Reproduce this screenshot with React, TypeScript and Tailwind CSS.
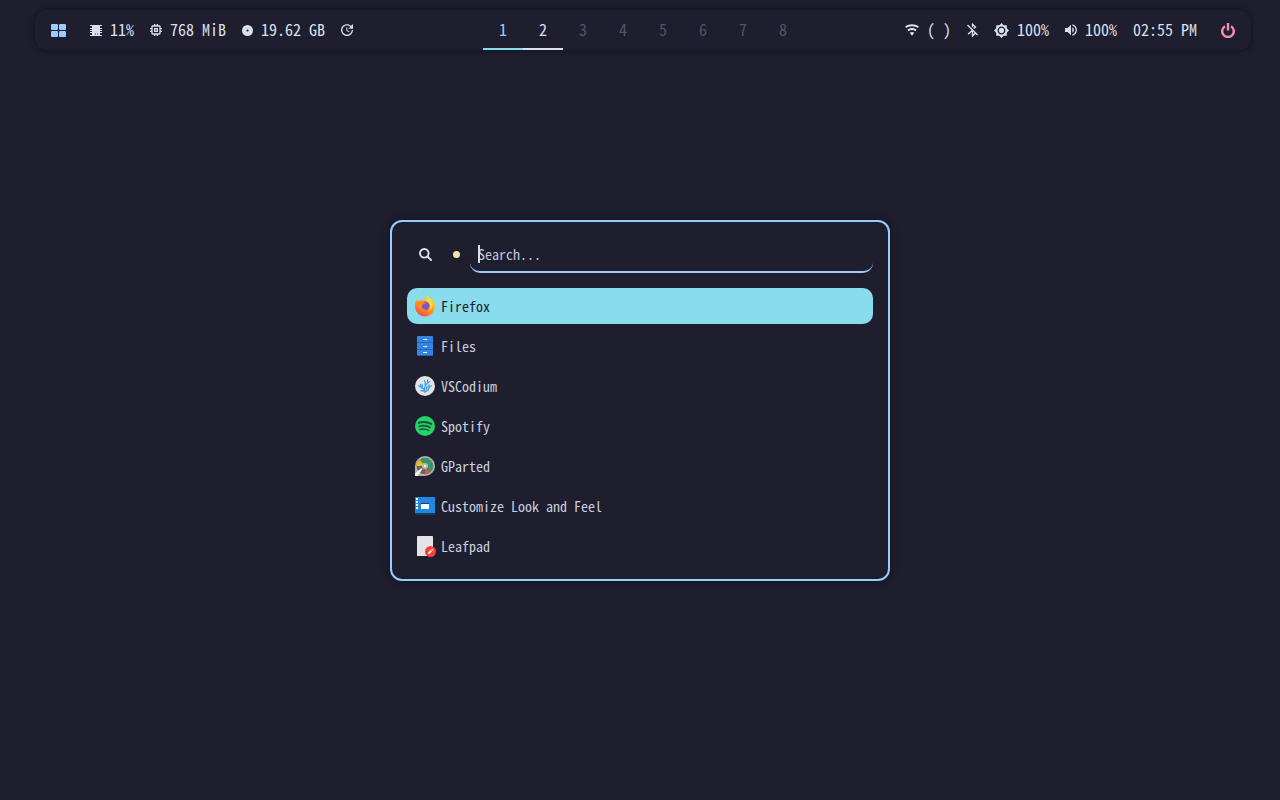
import type { ReactNode } from "react";
import { MdBluetoothDisabled, MdBrightness7, MdMemory, MdUpdate, MdVolumeUp } from "react-icons/md";

function GridIcon() {
  return (
    <svg viewBox="0 0 15 13" className="h-[13px] w-[15px] fill-[#96cdfb]">
      <rect width="7" height="6" rx="1" />
      <rect x="8" width="7" height="6" rx="1" />
      <rect y="7" width="7" height="6" rx="1" />
      <rect x="8" y="7" width="7" height="6" rx="1" />
    </svg>
  );
}

function ChipIcon() {
  return (
    <svg viewBox="0 0 12 11" className="h-[11px] w-3 fill-current">
      <path d="M2 0h8v11H2z" />
      <path d="M0 0h12v1H0zM0 3h12v1H0zM0 5h12v1H0zM0 7h12v1H0zM0 10h12v1H0z" />
      <path d="M5 8h1v2H5zM7 8h1v2H7z" fill="#7c7c8e" />
    </svg>
  );
}

function DiscIcon() {
  return (
    <svg viewBox="0 0 11 11" className="size-[11px] fill-current">
      <circle cx="5.500" cy="5.500" r="5.500" />
      <circle cx="5.500" cy="5.500" r="1.100" fill="#1e1e2e" />
    </svg>
  );
}

function WifiIcon() {
  return (
    <svg viewBox="1 3 22 18" className="h-3 w-[14px] fill-current">
      <path d="M12 21l3.6-4.8C14.6 15.45 13.35 15 12 15s-2.6.45-3.6 1.2L12 21M12 3C7.95 3 4.21 4.34 1.2 6.6L3 9c2.5-1.88 5.62-3 9-3s6.5 1.12 9 3l1.8-2.4C19.79 4.34 16.05 3 12 3m0 6c-2.7 0-5.19.89-7.2 2.4l1.8 2.4C8.1 12.67 9.97 12 12 12s3.9.67 5.4 1.8l1.8-2.4C17.19 9.89 14.7 9 12 9z" />
    </svg>
  );
}

function PowerIcon() {
  return (
    <svg viewBox="0 0 14 15" className="h-[15px] w-[14px] fill-none stroke-[#f28fad]">
      <path d="M4 3.2A5.8 5.8 0 1 0 10 3.2M7 0v7.5" strokeWidth="2.4" />
    </svg>
  );
}

function SearchIcon() {
  return (
    <svg viewBox="0 0 13 13" className="size-[13px] fill-none stroke-current">
      <circle cx="5.3" cy="5.3" r="4.3" strokeWidth="1.9" />
      <path d="M8.5 8.5l3.6 3.6" strokeWidth="2" strokeLinecap="round" />
    </svg>
  );
}

function FirefoxIcon() {
  return (
    <svg viewBox="0 0 20 22" className="h-[22px] w-5">
      <defs>
        <linearGradient id="fox" x1="0.8" y1="0.1" x2="0.25" y2="1">
          <stop offset="0" stopColor="#ffde3b" />
          <stop offset="0.4" stopColor="#ffa21f" />
          <stop offset="0.7" stopColor="#ff7a24" />
          <stop offset="1" stopColor="#f0405f" />
        </linearGradient>
      </defs>
      <path d="M1.4 4.6L3 6.2l2-.4c2 0 3.400-1.800 5.400-1.800C10.600 2.600 11.600 1.200 13 .6c.2 2 1.600 2.600 3 4.600l.6-1.600C19 6 20 8.500 20 11.500A10 10 0 0 1 0 11.500C0 9 .6 6.600 1.400 4.600z" fill="url(#fox)" />
      <path d="M13 .8c.2 3 4.600 4.400 4.600 9 0 2.800-1.200 4.800-3.600 5.800 1.800-3 1.400-5.800-.2-7.200-2.600-1.600-4.200-4.600-.8-7.600z" fill="#ffd93b" />
      <circle cx="10.200" cy="10.800" r="4.400" fill="#7d54c7" />
      <path d="M3 6.400c2-1 4.200-.6 5.400 1l2.400.4c-.4 1-1.600 1.400-3 1.800-.4.300-.8.800-1 1.400.2 2 1.600 3.400 3.800 3.600-1.600 1.400-4.400.8-5.800-1.200C2.600 11.600 2.400 8.800 3 6.400z" fill="#ff8a1c" />
    </svg>
  );
}

function FilesIcon() {
  return (
    <svg viewBox="0 0 16 20" className="h-5 w-4">
      <rect width="16" height="20" rx="0.500" fill="#3584e4" />
      <path d="M0 6h16v1H0zM0 13h16v1H0zM0 19h16v1H0z" fill="#1f66bd" />
      <path d="M6 3h4v1H6zM6 10h4v1H6zM6 16h4v1H6z" fill="#fff" />
    </svg>
  );
}

function CodiumIcon() {
  return (
    <svg viewBox="0 0 20 20" className="size-5">
      <circle cx="10" cy="10" r="10" fill="#e4e4e4" />
      <g fill="none" stroke="#3fa0e8" strokeWidth="1.300" strokeLinecap="round">
        <path d="M10 16.500c-1-2-.5-4.500.2-6.500.6-2 0-4-.7-5.500M10 13c-3 0-4.500-1.500-4.500-4.500M5.700 11L3.600 9.700M7.500 12.500L7.200 8.700M10 15.500c3.500-.5 4.500-3 4-6.500M14 11.500l2.300-1.700M10.400 9.500L12.600 7V4M12.500 7l2-1.300M6 14.500l2.500.5M11.500 13l.7-2.500" />
      </g>
    </svg>
  );
}

function SpotifyIcon() {
  return (
    <svg viewBox="0 0 20 20" className="size-5">
      <circle cx="10" cy="10" r="10" fill="#24d366" />
      <g fill="none" stroke="#1d4f39" strokeLinecap="round">
        <path d="M3.800 6.800c4.200-1.300 8.800-.9 12.400 1.100" strokeWidth="2.100" />
        <path d="M4.400 10.300c3.700-1.100 7.500-.7 10.700 1.100" strokeWidth="1.700" />
        <path d="M5 13.500c3.200-.9 6.200-.6 8.900 1" strokeWidth="1.400" />
      </g>
    </svg>
  );
}

function PartedIcon() {
  return (
    <svg viewBox="0 0 20 20" className="size-5">
      <path d="M0 20V10A10 10 0 1 1 10 20z" fill="#b1b1ae" />
      <circle cx="10" cy="10" r="8.300" fill="#3d9462" />
      <path d="M10 10L4.500 3.800A8.300 8.300 0 0 0 1.700 10z" fill="#fbb90c" />
      <path d="M10 10H1.700A8.300 8.300 0 0 0 10 18.300z" fill="#62625f" />
      <path d="M10 10v8.300a8.300 8.300 0 0 0 4.600-1.500z" fill="#f4484d" />
      <circle cx="10" cy="10" r="3" fill="#b8b8b5" />
      <circle cx="10" cy="10" r="1.200" fill="#eee" />
      <path d="M0 20v-2.500l6.500-5.500 1 1L2.500 20z" fill="#f4f4f4" />
    </svg>
  );
}

function AppearanceIcon() {
  return (
    <svg viewBox="0 0 20 18" className="h-[18px] w-5">
      <rect width="20" height="18" rx="0.500" fill="#1b3a57" />
      <rect width="20" height="16" rx="0.500" fill="#1e88e5" />
      <path d="M1 1h2v2H1zM1 4h2v2H1zM1 7h2v2H1zM1 10h2v2H1z" fill="#fff" />
      <path d="M6 6h8v1H6z" fill="#17426a" />
      <path d="M6 7h8v5H6z" fill="#fff" />
    </svg>
  );
}

function LeafpadIcon() {
  return (
    <svg viewBox="0 0 20 21" className="h-[21px] w-5 overflow-visible">
      <rect x="2" width="16" height="20" rx="0.500" fill="#e4e4e4" />
      <circle cx="15.500" cy="15.500" r="5.500" fill="#f44336" />
      <path d="M13 18l.4-1.700 2.300-2.300 1.300 1.300-2.300 2.300zM16.200 13.500l.8-.8 1.300 1.300-.8.8z" fill="#fff" />
    </svg>
  );
}

function Stat({ icon, children }: { icon: ReactNode; children?: ReactNode }) {
  return (
    <div className="flex items-center gap-2 whitespace-pre">
      {icon}
      {children && <span className="pb-[2px]">{children}</span>}
    </div>
  );
}

const workspaces = [
  { id: 1, style: "border-[#89dceb] text-[#96cdfb]" },
  { id: 2, style: "border-[#d9e0ee] text-[#d9e0ee]" },
  { id: 3, style: "border-transparent text-[#575268]" },
  { id: 4, style: "border-transparent text-[#575268]" },
  { id: 5, style: "border-transparent text-[#575268]" },
  { id: 6, style: "border-transparent text-[#575268]" },
  { id: 7, style: "border-transparent text-[#575268]" },
  { id: 8, style: "border-transparent text-[#575268]" },
];

const apps = [
  { name: "Firefox", icon: <FirefoxIcon /> },
  { name: "Files", icon: <FilesIcon /> },
  { name: "VSCodium", icon: <CodiumIcon /> },
  { name: "Spotify", icon: <SpotifyIcon /> },
  { name: "GParted", icon: <PartedIcon /> },
  { name: "Customize Look and Feel", icon: <AppearanceIcon /> },
  { name: "Leafpad", icon: <LeafpadIcon /> },
];

function TopBar() {
  return (
    <header className="mt-[10px] mr-[29px] ml-[35px] grid h-10 grid-cols-[1fr_auto_1fr] items-center rounded-xl bg-[#1e1e2e] px-4 text-base leading-5 font-medium shadow-[0_0_6px_rgba(0,0,0,0.45)]">
      <div className="flex items-center gap-4">
        <button aria-label="Applications" className="mr-2">
          <GridIcon />
        </button>
        <Stat icon={<ChipIcon />}>11%</Stat>
        <Stat icon={<MdMemory viewBox="3 3 18 18" className="size-3" />}>768 MiB</Stat>
        <Stat icon={<DiscIcon />}>19.62 GB</Stat>
        <button aria-label="Check for updates">
          <MdUpdate viewBox="3 3 18 18" className="size-3" />
        </button>
      </div>
      <nav aria-label="Workspaces" className="flex self-stretch">
        {workspaces.map((w) => (
          <button key={w.id} className={`w-10 border-b-2 ${w.style}`}>
            {w.id}
          </button>
        ))}
      </nav>
      <div className="flex items-center justify-end gap-4">
        <Stat icon={<WifiIcon />}>( )</Stat>
        <Stat icon={<MdBluetoothDisabled viewBox="4 2 16 20" className="h-[14px] w-[11px]" />} />
        <Stat icon={<MdBrightness7 viewBox="0.690 0.690 22.620 22.620" className="size-[15px]" />}>100%</Stat>
        <Stat icon={<MdVolumeUp viewBox="3 3 18 18" className="size-3" />}>100%</Stat>
        <time className="pb-[2px]">02:55 PM</time>
        <button aria-label="Power" className="ml-2">
          <PowerIcon />
        </button>
      </div>
    </header>
  );
}

function Launcher() {
  return (
    <section className="flex w-[500px] max-w-full flex-col gap-[15px] rounded-xl border-2 border-[#96cdfb] bg-[#1e1e2e] p-[15px] text-sm leading-5 shadow-[0_0_8px_rgba(0,0,0,0.4)]">
      <label className="flex h-9 items-center">
        <span className="flex w-9 justify-center pb-[2px]">
          <SearchIcon />
        </span>
        <span className="mx-[10px] mb-[2px] size-[7px] rounded-full bg-[#fae3b0]" />
        <span className="relative h-full flex-1">
          <input
            type="text"
            aria-label="Search applications"
            placeholder="Search..."
            className="h-full w-full rounded-[10px] border-b-2 border-[#96cdfb] bg-transparent px-2 outline-none placeholder:text-[#c3c9d8]"
          />
          <span className="absolute top-2 left-2 h-[18px] w-[2px] bg-[#d9e0ee]" />
        </span>
      </label>
      <ul className="flex flex-col gap-1">
        {apps.map((app, i) => (
          <li key={app.name}>
            <button
              className={`flex h-9 w-full items-center gap-[6px] rounded-[10px] px-2 text-left ${
                i === 0 ? "bg-[#89dceb] text-[#1e1e2e]" : "text-[#c9cfde]"
              }`}
            >
              <span className="flex w-5 justify-center">{app.icon}</span>
              {app.name}
            </button>
          </li>
        ))}
      </ul>
    </section>
  );
}

export default function App() {
  return (
    <div className="flex min-h-screen flex-col bg-[#1e1e2e] font-['Noto_Sans_Mono_CJK_SC','Liberation_Mono',monospace] text-[#d9e0ee]">
      <TopBar />
      <main className="flex flex-1 items-center justify-center pb-[49px]">
        <Launcher />
      </main>
    </div>
  );
}
